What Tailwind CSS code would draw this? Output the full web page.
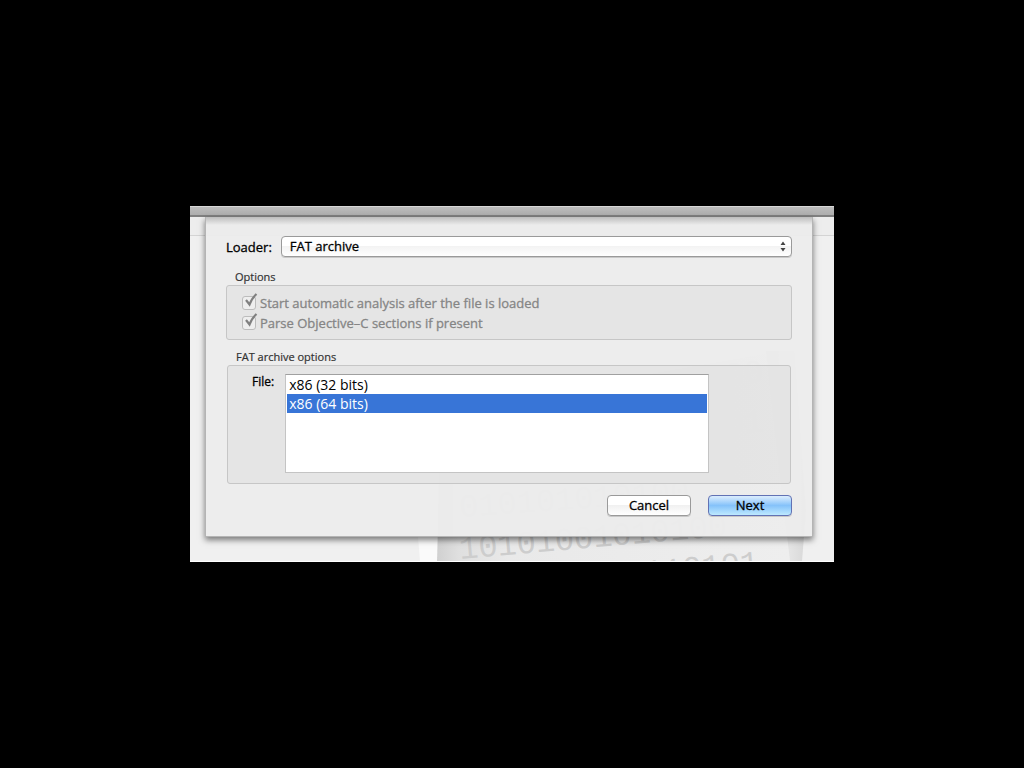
<!DOCTYPE html>
<html lang="en">
  <head>
    <meta charset="UTF-8" />
    <meta name="viewport" content="width=device-width, initial-scale=1.0" />
    <script src="https://cdn.jsdelivr.net/npm/@tailwindcss/browser@4"></script>
    <title>Loader</title>
  </head>
  <body class="min-h-screen bg-black flex items-center justify-center font-['Lucida_Grande','Open_Sans',sans-serif] text-[13px] leading-5 text-black">
    <!-- window -->
    <div class="relative w-full max-w-[644px] bg-[#f0f0f0] overflow-hidden border-b border-white">
      <div class="h-[11px] bg-linear-to-b from-[#bcbcbc] to-[#aeaeae] border-t border-t-[#d8d8d8] border-b-2 border-b-[#808080]"></div>
      <div class="absolute inset-x-0 top-[11px] h-[19px] bg-[#ededed] border-b border-[#d4d4d4]"></div>

      <!-- binary document artwork -->
      <svg class="absolute bottom-0 right-0 w-[434px] h-[210px]" viewBox="0 0 434 210" aria-hidden="true">
        <defs>
          <linearGradient id="page" x1="0" x2="1">
            <stop offset="0" stop-color="#d0d0d0" />
            <stop offset="0.06" stop-color="#dfdfdf" />
            <stop offset="0.2" stop-color="#e9e9e9" />
            <stop offset="1" stop-color="#eeeeee" />
          </linearGradient>
          <linearGradient id="side" x1="0" x2="1">
            <stop offset="0" stop-color="#d2d2d2" />
            <stop offset="0.6" stop-color="#e4e4e4" />
            <stop offset="1" stop-color="#d8d8d8" />
          </linearGradient>
        </defs>
        <path d="M40 60L380 0L390 210H37Z" fill="url(#page)" />
        <path d="M8 60L20 210H37L40 60Z" fill="#fafafa" />
        <path d="M366 0L390 210H402L406 160L394 0Z" fill="url(#side)" />
        <g fill="#cdcdcd" font-family="Liberation Mono" font-size="32">
          <text transform="translate(326 34) rotate(-6)">00</text>
          <text transform="translate(326 84) rotate(-6)">01</text>
          <text transform="translate(60 166) rotate(-4)">010101010100</text>
          <text transform="translate(60 208) rotate(-5)">10101001010100</text>
          <text transform="translate(226 233) rotate(-5)">0110101</text>
        </g>
      </svg>

      <!-- sheet -->
      <form class="relative ml-[15px] mr-[21px] mb-6 px-5 pt-[19px] pb-5 bg-[#ececec]/95 border-x border-b border-[#b4b4b4] shadow-[0_3px_6px_rgba(0,0,0,0.5)]">
        <div class="absolute inset-x-0 top-0 h-2 bg-linear-to-b from-black/20 to-transparent"></div>

        <div class="flex items-center gap-[9px]">
          <label for="loader" class="shrink-0 [-webkit-text-stroke:0.3px]">Loader:</label>
          <div class="relative flex-1">
            <select id="loader" class="block appearance-none w-full h-[21px] pl-2 pr-6 leading-[17px] rounded border border-[#9a9a9a] bg-linear-to-b from-white from-45% via-[#f3f3f3] via-50% to-white shadow-[0_1px_0_rgba(0,0,0,0.15)] [-webkit-text-stroke:0.3px]">
              <option>FAT archive</option>
            </select>
            <svg class="absolute right-[6px] top-[5px] w-[6px] h-[11px] pointer-events-none" viewBox="0 0 6 11" fill="#444">
              <path d="M3 0.500L5.500 4H0.500ZM3 10.500L0.500 7H5.500Z" />
            </svg>
          </div>
        </div>

        <fieldset class="mt-3" disabled>
          <legend class="pl-[9px] text-[11px] leading-4 text-[#333] [-webkit-text-stroke:0.2px]">Options</legend>
          <div class="h-[55px] pl-[15px] pt-[7px] rounded-[3px] border border-[#c6c6c6] bg-[#e3e3e3]/90 text-[#858585] [-webkit-text-stroke:0.3px]">
            <label class="relative flex items-center gap-1 h-5">
              <input type="checkbox" checked disabled class="appearance-none w-[14px] h-[14px] rounded-[3px] border border-[#bcbcbc] bg-[#eeeeee]" />
              <svg class="absolute left-[2px] top-0 w-[14px] h-[15px]" viewBox="0 0 14 15" fill="none" stroke="#808080" stroke-width="2.2">
                <path d="M2 7L5.500 11.500C7 7.500 9 4 12.500 1" />
              </svg>
              Start automatic analysis after the file is loaded
            </label>
            <label class="relative flex items-center gap-1 h-5">
              <input type="checkbox" checked disabled class="appearance-none w-[14px] h-[14px] rounded-[3px] border border-[#bcbcbc] bg-[#eeeeee]" />
              <svg class="absolute left-[2px] top-0 w-[14px] h-[15px]" viewBox="0 0 14 15" fill="none" stroke="#808080" stroke-width="2.2">
                <path d="M2 7L5.500 11.500C7 7.500 9 4 12.500 1" />
              </svg>
              Parse Objective–C sections if present
            </label>
          </div>
        </fieldset>

        <fieldset class="mt-[9px] mx-px">
          <legend class="pl-[9px] text-[11px] leading-4 text-[#333] [-webkit-text-stroke:0.2px]">FAT archive options</legend>
          <div class="flex gap-[11px] h-[119px] pl-6 pr-[81px] pt-2 rounded-[3px] border border-[#c6c6c6] bg-[#e3e3e3]/90">
            <label for="file" class="shrink-0 leading-4 text-[12px] [-webkit-text-stroke:0.3px]">File:</label>
            <select id="file" size="5" class="flex-1 min-w-0 h-[99px] appearance-none overflow-hidden bg-white border border-[#c4c4c4] border-t-[#a0a0a0] px-px text-[14px]">
              <option class="h-[19px] min-h-0 p-0 pl-[2px] leading-[19px]">x86 (32 bits)</option>
              <option selected class="h-[19px] min-h-0 p-0 pl-[2px] leading-[19px] bg-linear-to-b from-[#3875d7] to-[#3875d7] [-webkit-text-fill-color:white]">x86 (64 bits)</option>
            </select>
          </div>
        </fieldset>

        <div class="mt-[11px] flex justify-end gap-[17px]">
          <button type="button" class="w-[84px] h-[21px] leading-[17px] rounded border border-[#9a9a9a] bg-linear-to-b from-white from-45% via-[#f1f1f1] via-50% to-white shadow-[0_1px_0_rgba(0,0,0,0.15)] [-webkit-text-stroke:0.3px]">Cancel</button>
          <button type="submit" class="w-[84px] h-[21px] leading-[17px] rounded border border-[#6272b4] bg-linear-to-b from-[#d5eafd] from-5% via-[#85c2fa] via-50% to-[#bde9ff] shadow-[0_1px_0_rgba(0,0,0,0.15)] [-webkit-text-stroke:0.3px]">Next</button>
        </div>
      </form>
    </div>
  </body>
</html>
